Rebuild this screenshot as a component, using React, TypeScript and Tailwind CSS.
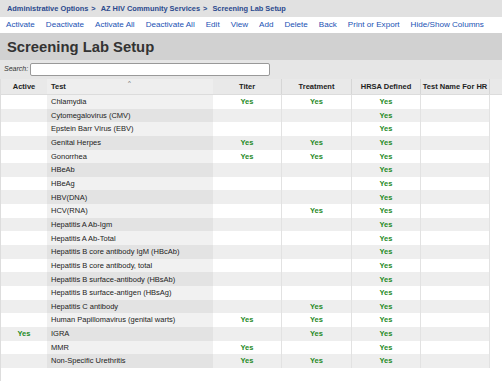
const font = { fontFamily: '"Liberation Sans", Arial, sans-serif' };

interface LabRow {
  test: string;
  active?: boolean;
  titer?: boolean;
  treatment?: boolean;
  hrsa?: boolean;
}

const rows: LabRow[] = [
  { test: "Chlamydia", titer: true, treatment: true, hrsa: true },
  { test: "Cytomegalovirus (CMV)", hrsa: true },
  { test: "Epstein Barr Virus (EBV)", hrsa: true },
  { test: "Genital Herpes", titer: true, treatment: true, hrsa: true },
  { test: "Gonorrhea", titer: true, treatment: true, hrsa: true },
  { test: "HBeAb", hrsa: true },
  { test: "HBeAg", hrsa: true },
  { test: "HBV(DNA)", hrsa: true },
  { test: "HCV(RNA)", treatment: true, hrsa: true },
  { test: "Hepatitis A Ab-Igm", hrsa: true },
  { test: "Hepatitis A Ab-Total", hrsa: true },
  { test: "Hepatitis B core antibody IgM (HBcAb)", hrsa: true },
  { test: "Hepatitis B core antibody, total", hrsa: true },
  { test: "Hepatitis B surface-antibody (HBsAb)", hrsa: true },
  { test: "Hepatitis B surface-antigen (HBsAg)", hrsa: true },
  { test: "Hepatitis C antibody", treatment: true, hrsa: true },
  { test: "Human Papillomavirus (genital warts)", titer: true, treatment: true, hrsa: true },
  { test: "IGRA", active: true, treatment: true, hrsa: true },
  { test: "MMR", titer: true, hrsa: true },
  { test: "Non-Specific Urethritis", titer: true, treatment: true, hrsa: true },
];

const actions = [
  "Activate",
  "Deactivate",
  "Activate All",
  "Deactivate All",
  "Edit",
  "View",
  "Add",
  "Delete",
  "Back",
  "Print or Export",
  "Hide/Show Columns",
];

const Yes = ({ show }: { show?: boolean }) =>
  show ? <span className="font-bold text-[#1f8a1f]">Yes</span> : null;

const App = () => {
  return (
    <div className="w-[502px] h-[381px] bg-white overflow-hidden text-[#222]" style={font}>
      {/* breadcrumb */}
      <div className="h-[17px] bg-[#e1e1e1] flex items-center pl-[7px] text-[7.4px] font-bold text-[#2b4a8e] gap-[3px]">
        <span>Administrative Options</span>
        <span>&gt;</span>
        <span className="ml-[2px]">AZ HIV Community Services</span>
        <span>&gt;</span>
        <span className="ml-[2px]">Screening Lab Setup</span>
      </div>

      {/* toolbar */}
      <div className="h-[16px] bg-white rounded-tl-[6px] flex items-center pl-[6px] gap-[11px] text-[8.1px] text-[#2152b4]">
        {actions.map((a) => (
          <span key={a} className="whitespace-nowrap">
            {a}
          </span>
        ))}
      </div>

      {/* title */}
      <div className="h-[27px] bg-[#d1d1d1] flex items-center pl-[7px] pt-[1px]">
        <h1 className="text-[14.8px] font-bold text-[#333]">Screening Lab Setup</h1>
      </div>

      {/* search */}
      <div className="h-[19px] bg-[#e6e6e6] flex items-center pl-[4px] gap-[2px]">
        <span className="text-[7px] italic text-[#333]">Search:</span>
        <input
          className="w-[240px] h-[13px] bg-white border border-[#999] rounded-[2px] outline-none"
          readOnly
        />
      </div>

      {/* table */}
      <div className="border-l border-[#ddd] text-[7.5px]">
        <div className="flex h-[16px] bg-[#e9e9e9] font-bold items-center border-b border-[#dcdcdc]">
          <div className="w-[46px] text-center">Active</div>
          <div className="w-[166px] h-full flex items-center pl-[4px] bg-[#eeeeee] relative">
            Test
            <span className="absolute left-[81px] top-[1px] text-[6px] font-normal text-[#666] leading-none">
              ^
            </span>
          </div>
          <div className="w-[69px] h-full flex items-center justify-center border-r border-[#d6d6d6]">
            Titer
          </div>
          <div className="w-[70px] h-full flex items-center justify-center border-r border-[#d6d6d6]">
            Treatment
          </div>
          <div className="w-[69px] h-full flex items-center justify-center border-r border-[#d6d6d6]">
            HRSA Defined
          </div>
          <div className="w-[69px] h-full flex items-center justify-center border-r border-[#d6d6d6] whitespace-nowrap">
            Test Name For HR
          </div>
        </div>

        {rows.map((r, i) => {
          const even = i % 2 === 1;
          const cell = even ? "bg-[#eeeeee]" : "bg-white";
          return (
            <div key={r.test} className="flex h-[13.65px] items-center">
              <div className={`w-[46px] h-full flex items-center justify-center ${cell}`}>
                <Yes show={r.active} />
              </div>
              <div
                className={`w-[166px] h-full flex items-center pl-[4px] whitespace-nowrap ${
                  even ? "bg-[#e3e3e3]" : "bg-[#f1f1f1]"
                }`}
              >
                {r.test}
              </div>
              <div className={`w-[69px] h-full flex items-center justify-center border-r border-[#e2e2e2] ${cell}`}>
                <Yes show={r.titer} />
              </div>
              <div className={`w-[70px] h-full flex items-center justify-center border-r border-[#e2e2e2] ${cell}`}>
                <Yes show={r.treatment} />
              </div>
              <div className={`w-[69px] h-full flex items-center justify-center border-r border-[#e2e2e2] ${cell}`}>
                <Yes show={r.hrsa} />
              </div>
              <div className={`w-[69px] h-full border-r border-[#e2e2e2] ${cell}`} />
            </div>
          );
        })}
        <div className="h-[14px]" />
      </div>
    </div>
  );
};

export default App;
